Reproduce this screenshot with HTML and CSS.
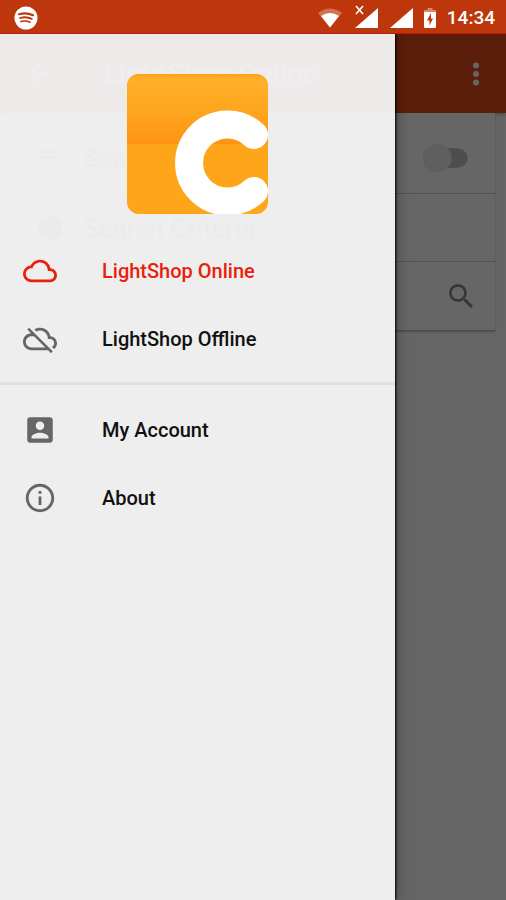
FILE: index.html
```html
<!DOCTYPE html>
<html lang="en">
<head>
<meta charset="utf-8">
<meta name="viewport" content="width=device-width, initial-scale=1">
<title>LightShop</title>
<link rel="stylesheet" href="styles.css">
</head>
<body>
<header class="status">
  <svg class="status-app" viewBox="0 0 24 24" aria-hidden="true">
    <circle cx="12" cy="12" r="11.5" fill="#fff"/>
    <g fill="none" stroke="#be360c" stroke-linecap="round">
      <path d="M5 8.2c5-1.500 10-1 14 1" stroke-width="2.200"/>
      <path d="M6 12c4-1.200 8.500-.8 11.800.9" stroke-width="1.800"/>
      <path d="M6.800 15.500c3.500-.9 6.500-.5 9.200.8" stroke-width="1.500"/>
    </g>
  </svg>
  <div class="status-icons">
    <svg class="wifi" viewBox="0 0 26 20" aria-hidden="true">
      <path d="M1 5Q13-4 25 5L13 19.500Z" fill="#fff" opacity=".3"/>
      <path d="M4 8Q13 2 22 8L13 19.500Z" fill="#fff"/>
    </svg>
    <svg class="signal" viewBox="0 0 24 23" aria-hidden="true">
      <path d="M24 3v20H1Z" fill="#fff"/>
      <path d="M0 0h11v11H0Z" fill="#be360c"/>
      <path d="m2 1 7 8M9 1 2 9" stroke="#fff" stroke-width="1.600"/>
    </svg>
    <svg class="signal" viewBox="0 0 24 23" aria-hidden="true"><path d="M24 3v20H1Z" fill="#fff"/></svg>
    <svg class="battery" viewBox="0 0 12 20" aria-hidden="true">
      <path d="M3.500 0h5v2H12v4H0V2h3.500Z" fill="#fff" opacity=".4"/>
      <path d="M0 4h12v15a1 1 0 0 1-1 1H1a1 1 0 0 1-1-1Z" fill="#fff"/>
      <path d="M7 5 3 12.500H5.500v5L9 10.500H7Z" fill="#be360c"/>
    </svg>
  </div>
  <time class="clock">14:34</time>
</header>
<div class="screen">
  <main class="page">
    <div class="toolbar">
      <svg class="toolbar-icon" viewBox="0 0 24 24" aria-hidden="true"><path d="M20 11H7.800l5.600-5.600L12 4l-8 8 8 8 1.400-1.400L7.800 13H20z" fill="currentColor"/></svg>
      <h1 class="title">LightShop Online</h1>
      <button class="more" type="button" aria-label="More options">
        <svg viewBox="0 0 8 24" aria-hidden="true"><g fill="currentColor"><circle cx="4" cy="3.500" r="3"/><circle cx="4" cy="12" r="3"/><circle cx="4" cy="20.500" r="3"/></g></svg>
      </button>
    </div>
    <section class="card">
      <div class="row row-sort">
        <svg class="row-icon" viewBox="0 0 24 24" aria-hidden="true"><path d="M3 6h18v2H3zm3 5h12v2H6zm4 5h4v2h-4z" fill="currentColor"/></svg>
        <label class="row-label" for="scan">Scan</label>
        <input class="switch" id="scan" type="checkbox" role="switch">
      </div>
      <div class="row">
        <svg class="row-icon" viewBox="0 0 24 24" aria-hidden="true"><circle cx="13" cy="12" r="9" fill="currentColor"/></svg>
        <span class="row-label">Search Criteria</span>
      </div>
      <div class="row row-search">
        <button class="search" type="button" aria-label="Search">
          <svg viewBox="3 3 17.500 17.500" aria-hidden="true"><path fill="currentColor" d="M15.500 14h-.79l-.28-.27A6.470 6.470 0 0 0 16 9.500 6.500 6.500 0 1 0 9.500 16c1.610 0 3.090-.59 4.230-1.570l.27.280v.79l5 4.990L20.490 19l-4.990-5zm-6 0C7.010 14 5 11.990 5 9.500S7.010 5 9.500 5 14 7.010 14 9.500 11.990 14 9.500 14z"/></svg>
        </button>
      </div>
    </section>
  </main>
  <div class="scrim"></div>
  <nav class="drawer" aria-label="Main menu">
    <div class="brand">
      <svg class="logo" viewBox="0 0 141 140" role="img" aria-label="LightShop logo">
        <defs>
          <linearGradient id="gloss" x1="0" y1="0" x2="0" y2="1">
            <stop offset="0" stop-color="#ffa21b"/>
            <stop offset=".08" stop-color="#ffb02a"/>
            <stop offset=".5" stop-color="#ffa61f"/>
            <stop offset="1" stop-color="#ff9412"/>
          </linearGradient>
          <clipPath id="tile"><rect width="141" height="140" rx="12"/></clipPath>
        </defs>
        <g clip-path="url(#tile)">
          <path d="M0 0h141v140H0z" fill="#ffa51a"/>
          <path d="M0 0h141v70H0z" fill="url(#gloss)"/>
        </g>
        <path d="M127 61A38.500 38.500 0 1 0 127 117" fill="none" stroke="#fff" stroke-width="28" stroke-linecap="round"/>
      </svg>
    </div>
    <ul class="menu">
      <li><a class="item item-active" href="#online">
        <svg class="item-icon" viewBox="0 0 24 24" aria-hidden="true"><path fill="currentColor" d="M19.350 10.040A7.490 7.490 0 0 0 12 4C9.110 4 6.600 5.640 5.350 8.040A5.994 5.994 0 0 0 0 14c0 3.310 2.690 6 6 6h13c2.760 0 5-2.240 5-5 0-2.640-2.050-4.780-4.650-4.960zM19 18H6c-2.210 0-4-1.790-4-4s1.790-4 4-4h.71C7.370 7.690 9.480 6 12 6c3.040 0 5.500 2.460 5.500 5.500v.5H19c1.660 0 3 1.340 3 3s-1.340 3-3 3z"/></svg>
        <span>LightShop Online</span></a></li>
      <li><a class="item" href="#offline">
        <svg class="item-icon" viewBox="0 0 24 24" aria-hidden="true"><path fill="currentColor" d="M19.350 10.040A7.490 7.490 0 0 0 12 4c-1.480 0-2.850.43-4.010 1.170l1.460 1.460A5.497 5.497 0 0 1 17.500 11.500v.5H19c1.660 0 3 1.340 3 3 0 1.130-.64 2.110-1.560 2.620l1.450 1.450C23.160 18.160 24 16.680 24 15c0-2.640-2.050-4.780-4.650-4.960zM3 5.270l2.750 2.740C2.560 8.150 0 10.770 0 14c0 3.310 2.690 6 6 6h11.730l2 2L21 20.730 4.270 4 3 5.270zM7.730 10l8 8H6c-2.210 0-4-1.790-4-4s1.790-4 4-4h1.730z"/></svg>
        <span>LightShop Offline</span></a></li>
    </ul>
    <hr class="divider">
    <ul class="menu">
      <li><a class="item" href="#account">
        <svg class="item-icon" viewBox="0 0 24 24" aria-hidden="true"><path fill="currentColor" d="M3 5v14c0 1.100.89 2 2 2h14c1.100 0 2-.9 2-2V5c0-1.100-.9-2-2-2H5a2 2 0 0 0-2 2zm12 4c0 1.660-1.340 3-3 3s-3-1.340-3-3 1.340-3 3-3 3 1.340 3 3zm-9 8c0-2 4-3.100 6-3.100s6 1.100 6 3.100v1H6v-1z"/></svg>
        <span>My Account</span></a></li>
      <li><a class="item" href="#about">
        <svg class="item-icon" viewBox="0 0 24 24" aria-hidden="true"><path fill="currentColor" d="M11 17h2v-6h-2v6zm1-15C6.480 2 2 6.480 2 12s4.480 10 10 10 10-4.480 10-10S17.520 2 12 2zm0 18c-4.410 0-8-3.590-8-8s3.590-8 8-8 8 3.590 8 8-3.590 8-8 8zM11 9h2V7h-2v2z"/></svg>
        <span>About</span></a></li>
    </ul>
  </nav>
</div>
</body>
</html>
```
FILE: styles.css
```css
* {
  box-sizing: border-box;
}

body {
  margin: 0;
  min-height: 100vh;
  display: flex;
  flex-direction: column;
  font-family: Roboto, "Liberation Sans", sans-serif;
  font-size: 20px;
  font-weight: 500;
  line-height: 24px;
  color: #111;
}

button {
  padding: 0;
  border: 0;
  background: none;
  color: inherit;
}

svg {
  display: block;
}

.status {
  height: 34px;
  padding: 2px 11px 0 14px;
  display: flex;
  align-items: center;
  background: #be360c;
  border-bottom: 1px solid #b8200a;
  color: #fff;
}

.status-app {
  width: 24px;
  height: 24px;
}

.status-icons {
  flex: 1;
  display: flex;
  justify-content: flex-end;
  align-items: flex-end;
  gap: 11px;
  padding-bottom: 2px;
}

.wifi {
  width: 26px;
  height: 20px;
}

.signal {
  width: 24px;
  height: 23px;
}

.battery {
  width: 12px;
  height: 20px;
}

.clock {
  margin-left: 11px;
  font-size: 19px;
}

.screen {
  position: relative;
  flex: 1;
  display: flex;
  overflow: hidden;
}

.page {
  flex: 1;
  background: #fcfcfc;
}

.toolbar {
  height: 79px;
  padding: 0 24px;
  display: flex;
  align-items: center;
  background: #e34b1b;
  box-shadow: 0 1px 4px rgba(0, 0, 0, .3);
  color: #fff;
}

.toolbar-icon {
  width: 32px;
  height: 32px;
}

.title {
  flex: 1;
  margin: 0 0 0 48px;
  font-size: 28px;
  font-weight: 500;
}

.more svg {
  width: 12px;
  height: 24px;
}

.card {
  margin: 0 11px;
  background: #fff;
  border-bottom: 1px solid #bbb;
  box-shadow: 0 1px 2px rgba(0, 0, 0, .2);
}

.row {
  height: 68px;
  padding: 0 22px;
  display: flex;
  align-items: center;
  border-bottom: 1px solid #ccc;
  color: #777;
}

.row-sort {
  height: 81px;
  padding: 10px 27px 0 22px;
}

.row-search {
  border-bottom: 0;
  justify-content: flex-end;
}

.row-icon {
  width: 32px;
  height: 32px;
}

.row-label {
  flex: 1;
  margin-left: 18px;
  font-size: 26px;
}

.switch {
  appearance: none;
  width: 46px;
  height: 30px;
  margin: 0;
  border-radius: 15px;
  background:
    radial-gradient(circle at 15px 15px, #ededed 14px, transparent 15px),
    radial-gradient(circle at 36px 15px, #c4c4c4 9px, transparent 10px),
    linear-gradient(#c4c4c4, #c4c4c4) 15px 5px / 21px 20px no-repeat;
}

.search {
  color: #888;
}

.search svg {
  width: 24px;
  height: 24px;
}

.scrim {
  position: absolute;
  inset: 0;
  background: rgba(0, 0, 0, .6);
}

.drawer {
  position: absolute;
  inset: 0 auto 0 0;
  width: 78%;
  background: rgba(246, 246, 246, .95);
  box-shadow: 1px 0 2px #000, 2px 0 12px rgba(0, 0, 0, .3);
}

.brand {
  padding: 40px 0 23px;
  display: flex;
  justify-content: center;
}

.logo {
  width: 141px;
  height: 140px;
}

.menu {
  margin: 0;
  padding: 0;
  list-style: none;
}

.item {
  height: 68px;
  padding: 0 23px;
  display: flex;
  align-items: center;
  gap: 45px;
  color: inherit;
  text-decoration: none;
}

.item-icon {
  width: 34px;
  height: 34px;
  color: #666;
}

.item-active,
.item-active .item-icon {
  color: #e8210c;
}

.divider {
  height: 3px;
  margin: 9px 0 11px;
  border: 0;
  background: #e0e0e0;
}
```
